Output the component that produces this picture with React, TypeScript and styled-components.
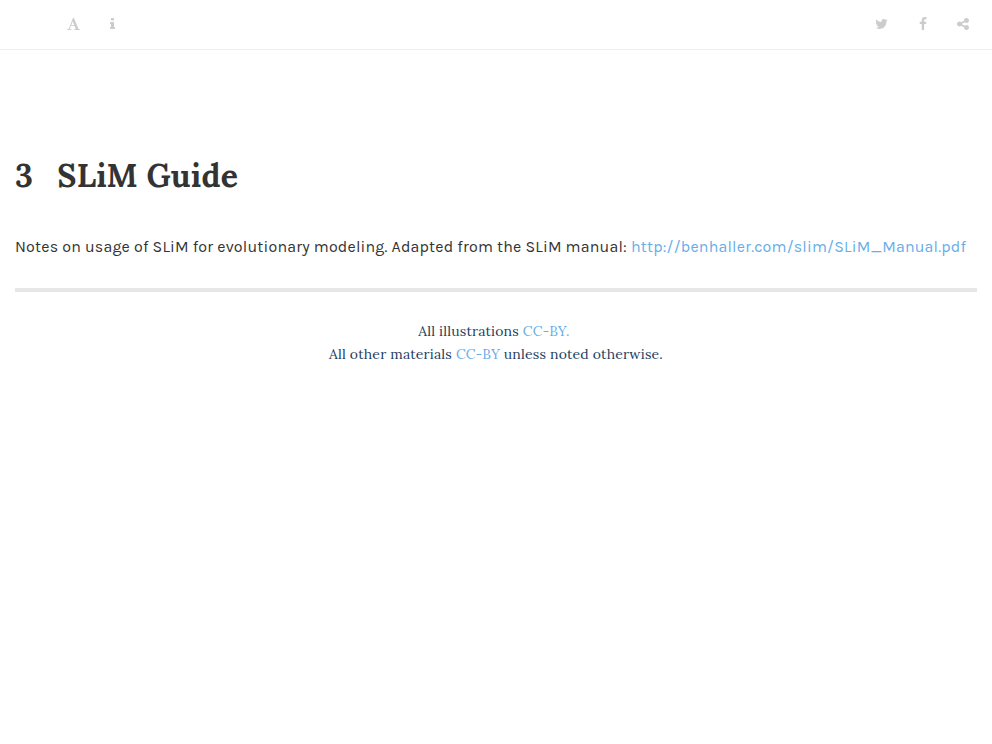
import React from 'react';
import styled, { createGlobalStyle } from 'styled-components';

const GlobalStyle = createGlobalStyle`
  * { box-sizing: border-box; }
  body {
    margin: 0;
    background: #fff;
    color: #333;
    font-family: Lora, "Noto Serif", "Liberation Serif", serif;
    letter-spacing: 0.2px;
    text-rendering: optimizeLegibility;
    -webkit-font-smoothing: antialiased;
  }
`;
const Header = styled.header`
  height: 50px;
  border-bottom: 1px solid #eee;
  display: flex;
  justify-content: space-between;
  align-items: flex-start;
  padding: 17px 8px 0 52px;
  color: #ccc;
`;
const Group = styled.div`
  display: flex;
`;
const IconButton = styled.a`
  display: flex;
  padding: 0 15px;
`;
const Glyph = styled.svg<{ $width: number }>`
  display: block;
  width: ${(p) => p.$width}px;
  height: 14px;
  fill: currentColor;
`;
const Page = styled.main`padding: 0 15px;`;
const Title = styled.h1`
  margin: 101px 0 0;
  font-size: 32px;
  line-height: 50px;
  display: flex;
  gap: 24.2px;
`;
const Notes = styled.p`
  margin: 33px 0 28px;
  font: 16px/26px Karla, "Liberation Sans", sans-serif;
  letter-spacing: 0.18px;
  white-space: nowrap;
`;
const Link = styled.a`color: #68ade7;`;
const Rule = styled.hr`
  height: 4px;
  margin: 0 0 28px;
  border: 0;
  background: #e7e7e7;
`;
const License = styled.footer`
  text-align: center;
  font-size: 14px;
  line-height: 23px;
  letter-spacing: 0.18px;
  color: #1c3d5f;
`;
const LicenseLine = styled.div<{ $trailing?: number }>`
  padding-right: ${(p) => p.$trailing ?? 0}px;
`;

const icons = {
  font: { width: 13, d: 'M789 559l-170 450q33 0 136.5 2t160.5 2q19 0 57-2-87-253-184-452zm-725 1105l2-79q23-7 56-12.5t57-10.5 49.5-14.5 44.5-29 31-50.5l237-616 280-724h128q8 14 11 21l205 480q33 78 106 257.5t114 274.5q15 34 58 144.5t72 168.5q20 45 35 57 19 15 88 29.5t84 20.5q6 38 6 57 0 5-.5 13.5t-.5 12.5q-63 0-190-8t-191-8q-76 0-215 7t-178 8q0-43 4-78l131-28q1 0 12.5-2.5t15.5-3.5 14.5-4.5 15-6.5 11-8 9-11 2.5-14q0-16-31-96.5t-72-177.5-42-100l-450-2q-26 58-76.5 195.5t-50.5 162.5q0 22 14 37.5t43.5 24.5 48.5 13.5 57 8.5 41 4q1 19 1 58 0 9-2 27-58 0-174.5-10t-174.5-10q-8 0-26.5 4t-21.5 4q-80 14-188 14z' },
  info: { width: 5, d: 'M1216 1344v128q0 26-19 45t-45 19h-512q-26 0-45-19t-19-45v-128q0-26 19-45t45-19h64v-384h-64q-26 0-45-19t-19-45v-128q0-26 19-45t45-19h384q26 0 45 19t19 45v576h64q26 0 45 19t19 45zm-128-1152v192q0 26-19 45t-45 19h-256q-26 0-45-19t-19-45v-192q0-26 19-45t45-19h256q26 0 45 19t19 45z' },
  twitter: { width: 15, d: 'M1684 408q-67 98-162 167 1 14 1 42 0 130-38 259.5t-115.5 248.5-184.5 210.5-258 146-323 54.5q-271 0-496-145 35 4 78 4 225 0 401-138-105-2-188-64.5t-114-159.5q33 5 61 5 43 0 85-11-112-23-185.5-111.5t-73.5-205.5v-4q68 38 146 41-66-44-105-115t-39-154q0-88 44-163 121 149 294.5 238.5t371.5 99.5q-8-38-8-74 0-134 94.5-228.5t228.5-94.5q140 0 236 102 109-21 205-78-37 115-142 178 93-10 186-50z' },
  facebook: { width: 8, d: 'M1343 12v264h-157q-86 0-116 36t-30 108v189h293l-39 296h-254v759h-306v-759h-255v-296h255v-218q0-186 104-288.5t277-102.5q147 0 228 12z' },
  share: { width: 12, d: 'M1344 1024q133 0 226.5 93.5t93.5 226.5-93.5 226.5-226.5 93.5-226.5-93.5-93.5-226.5q0-12 2-34l-360-180q-92 86-218 86-133 0-226.5-93.5t-93.5-226.5 93.5-226.5 226.5-93.5q126 0 218 86l360-180q-2-22-2-34 0-133 93.5-226.5t226.5-93.5 226.5 93.5 93.5 226.5-93.5 226.5-226.5 93.5q-126 0-218-86l-360 180q2 22 2 34t-2 34l360 180q92-86 218-86z' },
};

function ToolbarButton({ icon, label }: { icon: keyof typeof icons; label: string }) {
  const { width, d } = icons[icon];
  return (
    <IconButton aria-label={label}>
      <Glyph $width={width} viewBox={`${896 - width * 64} 0 ${width * 128} 1792`}>
        <path d={d} />
      </Glyph>
    </IconButton>
  );
}

export default function App() {
  return (
    <>
      <GlobalStyle />
      <Header>
        <Group>
          <ToolbarButton icon="font" label="Font settings" />
          <ToolbarButton icon="info" label="Information" />
        </Group>
        <Group>
          <ToolbarButton icon="twitter" label="Twitter" />
          <ToolbarButton icon="facebook" label="Facebook" />
          <ToolbarButton icon="share" label="Share" />
        </Group>
      </Header>
      <Page>
        <Title><span>3</span><span>SLiM Guide</span></Title>
        <Notes>Notes on usage of SLiM for evolutionary modeling. Adapted from the SLiM manual: <Link>http://benhaller.com/slim/SLiM_Manual.pdf</Link></Notes>
        <Rule />
        <License>
          <LicenseLine $trailing={4}>All illustrations <Link>CC-BY.</Link></LicenseLine>
          <LicenseLine>All other materials <Link>CC-BY</Link> unless noted otherwise.</LicenseLine>
        </License>
      </Page>
    </>
  );
}
